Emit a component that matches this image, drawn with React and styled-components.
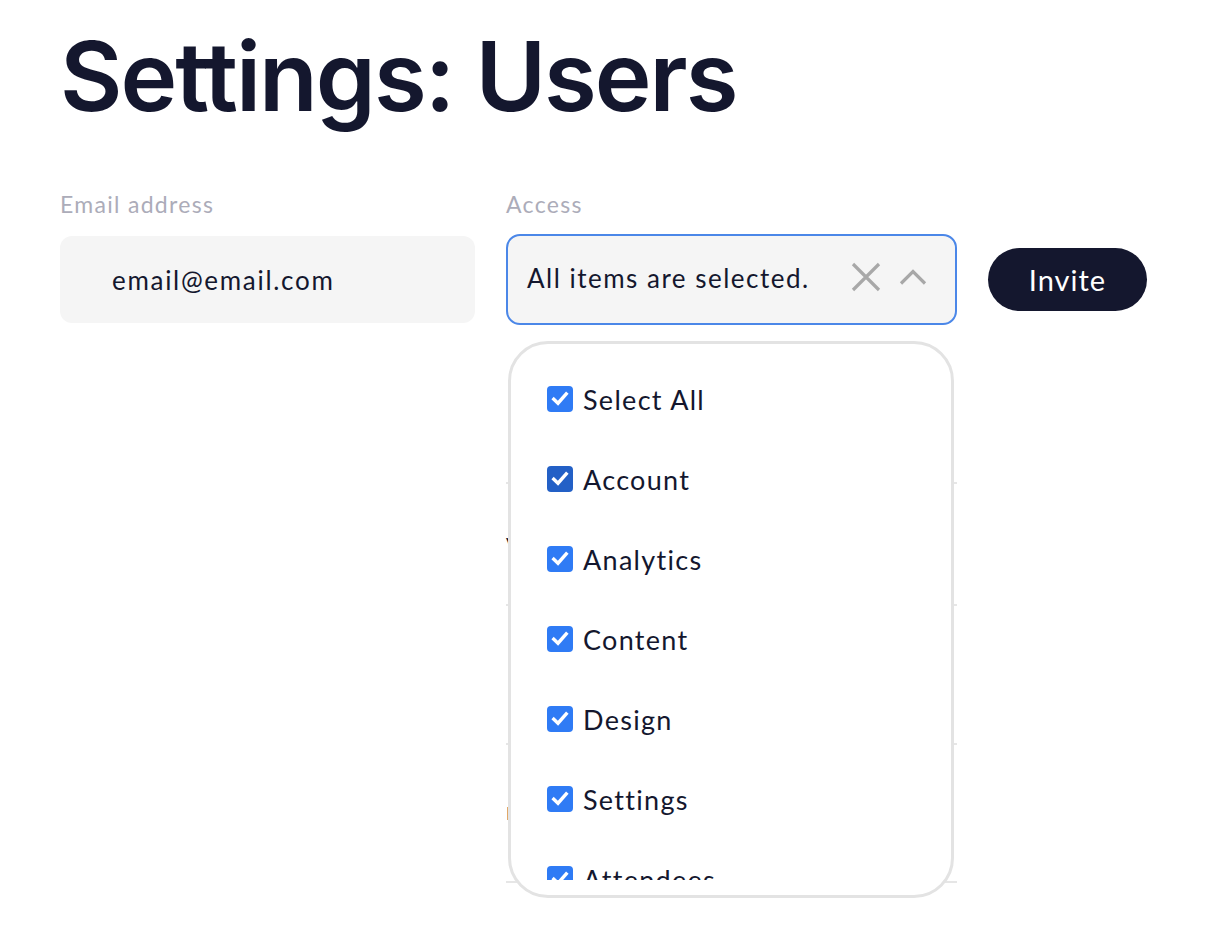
import React from "react";
import styled, { createGlobalStyle } from "styled-components";

const ITEMS = [
  { label: "Select All" },
  { label: "Account", active: true },
  { label: "Analytics" },
  { label: "Content" },
  { label: "Design" },
  { label: "Settings" },
  { label: "Attendees" },
];

// rows of the users table that sits under the open dropdown
const ROWS = [
  { height: 159, text: "" },
  { height: 122, text: "Viewer" },
  { height: 139, text: "" },
  { height: 138, text: "Member" },
];

function CheckIcon() {
  return (
    <svg width="20" height="20" viewBox="0 0 20 20" fill="none">
      <path
        d="M3.8 10.2 L8 14.2 L16.2 5"
        stroke="#fff"
        strokeWidth="3.4"
        strokeLinecap="square"
        strokeLinejoin="miter"
      />
    </svg>
  );
}

function App() {
  return (
    <Page>
      <GlobalStyle />
      <Title>Settings: Users</Title>
      <Form>
        <Field width={415}>
          <Label>Email address</Label>
          <Input>email@email.com</Input>
        </Field>
        <Field width={451}>
          <Label>Access</Label>
          <Select>
            <SelectText>All items are selected.</SelectText>
            <Icons>
              <svg width="30" height="30" viewBox="0 0 30 30">
                <path d="M2 2 L28 28 M28 2 L2 28" stroke="#a8a8a8" strokeWidth="3.2" />
              </svg>
              <svg width="28" height="18" viewBox="0 0 28 18">
                <path d="M2 15.5 L14 3.5 L26 15.5" stroke="#a8a8a8" strokeWidth="3.2" fill="none" />
              </svg>
            </Icons>
          </Select>
          <Rows>
            {ROWS.map((r, i) => (
              <Row key={i} style={{ height: r.height }}>
                {r.text}
              </Row>
            ))}
          </Rows>
          <Dropdown>
            <List>
              {ITEMS.map((item) => (
                <Item key={item.label}>
                  <Box active={item.active}>
                    <CheckIcon />
                  </Box>
                  {item.label}
                </Item>
              ))}
            </List>
          </Dropdown>
        </Field>
        <Button>Invite</Button>
      </Form>
    </Page>
  );
}

const GlobalStyle = createGlobalStyle`
  body {
    margin: 0;
    background: #fff;
    font-family: Lato, "Open Sans", sans-serif;
    color: #14172e;
  }
`;

const Page = styled.div`
  padding: 0 60px;
  height: 948px;
  overflow: hidden;
`;

const Title = styled.h1`
  margin: 0;
  padding-top: 26px;
  height: 166px;
  box-sizing: border-box;
  font-family: Inter, Lato, sans-serif;
  font-size: 96px;
  line-height: 100px;
  font-weight: 600;
  letter-spacing: -2px;
  color: #14172e;
`;

const Form = styled.div`
  display: flex;
  align-items: flex-start;
  gap: 31px;
  padding-top: 26px;
`;

const Field = styled.div`
  position: relative;
  display: flex;
  flex-direction: column;
  width: ${(p) => p.width}px;
`;

const Label = styled.div`
  font-size: 23px;
  line-height: 24px;
  letter-spacing: 1.3px;
  color: #acacb9;
  margin-bottom: 18px;
`;

const Input = styled.div`
  margin-top: 2px;
  height: 87px;
  box-sizing: border-box;
  background: #f5f5f5;
  border-radius: 12px;
  padding-left: 52px;
  display: flex;
  align-items: center;
  font-size: 26px;
  letter-spacing: 1.7px;
  color: #14172e;
`;

const Select = styled.div`
  height: 91px;
  box-sizing: border-box;
  background: #f5f5f5;
  border: 2px solid #4b87e8;
  border-radius: 14px;
  padding: 0 28px 0 19px;
  display: flex;
  align-items: center;
  justify-content: space-between;
`;

const SelectText = styled.span`
  font-size: 26px;
  letter-spacing: 1.5px;
  margin-top: -4px;
  color: #14172e;
`;

const Icons = styled.div`
  display: flex;
  align-items: center;
  gap: 18px;
  margin-top: -6px;
`;

const Rows = styled.div`
  display: flex;
  flex-direction: column;
`;

const Row = styled.div`
  box-sizing: border-box;
  border-bottom: 2px solid #e6e6e6;
  display: flex;
  align-items: center;
  font-size: 18px;
  color: #14172e;
`;

const Dropdown = styled.div`
  position: absolute;
  top: 149px;
  left: 2px;
  width: 446px;
  height: 557px;
  box-sizing: border-box;
  background: #fff;
  border: 3px solid #e3e3e3;
  border-radius: 40px;
  padding-bottom: 15px;
  overflow: hidden;
`;

const List = styled.div`
  height: 100%;
  overflow: hidden;
  padding-top: 15px;
  box-sizing: border-box;
`;

const Item = styled.div`
  height: 80px;
  display: flex;
  align-items: center;
  gap: 10px;
  padding-left: 36px;
  font-size: 27px;
  letter-spacing: 1.3px;
  color: #14172e;
`;

const Box = styled.span`
  width: 26px;
  height: 26px;
  border-radius: 4px;
  background: ${(p) => (p.active ? "#2360c6" : "#2f7bf5")};
  display: flex;
  align-items: center;
  justify-content: center;
  flex-shrink: 0;
`;

const Button = styled.button`
  margin-top: 56px;
  width: 159px;
  height: 63px;
  border: none;
  border-radius: 32px;
  background: #14172e;
  color: #fff;
  font-family: Lato, sans-serif;
  font-size: 29px;
  letter-spacing: 1px;
  cursor: pointer;
`;

export default App;
